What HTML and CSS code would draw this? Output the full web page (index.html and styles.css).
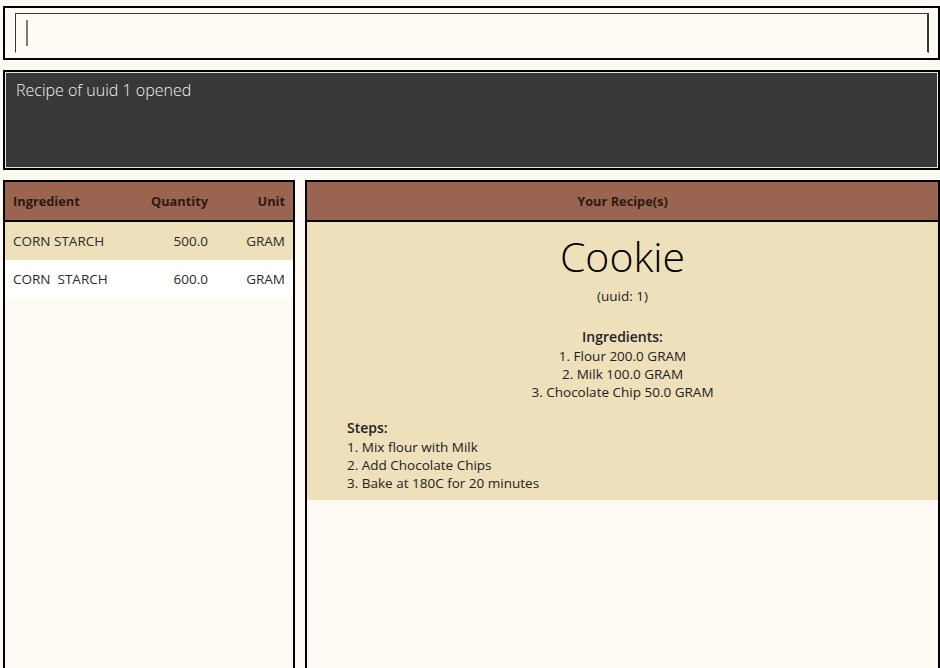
FILE: index.html
```html
<!DOCTYPE html>
<html>
<head>
<meta charset="utf-8">
<link rel="stylesheet" href="styles.css">
</head>
<body>
<div class="app">
  <div class="cmd-box">
    <div class="cmd-input"><span class="caret"></span></div>
  </div>
  <div class="result-box">
    <div class="result-inner">Recipe of uuid 1 opened</div>
  </div>
  <div class="main">
    <div class="panel left">
      <div class="thead row">
        <div class="c-name">Ingredient</div>
        <div class="c-qty">Quantity</div>
        <div class="c-unit">Unit</div>
      </div>
      <div class="row body-row odd">
        <div class="c-name">CORN STARCH</div>
        <div class="c-qty">500.0</div>
        <div class="c-unit">GRAM</div>
      </div>
      <div class="row body-row even">
        <div class="c-name">CORN&nbsp; STARCH</div>
        <div class="c-qty">600.0</div>
        <div class="c-unit">GRAM</div>
      </div>
    </div>
    <div class="panel right">
      <div class="thead center">Your Recipe(s)</div>
      <div class="recipe">
        <div class="title">Cookie</div>
        <div class="uuid">(uuid: 1)</div>
        <div class="ing-head">Ingredients:</div>
        <div class="ing-list">
          <div>1. Flour 200.0 GRAM</div>
          <div>2. Milk 100.0 GRAM</div>
          <div>3. Chocolate Chip 50.0 GRAM</div>
        </div>
        <div class="steps">
          <div class="steps-head">Steps:</div>
          <div>1. Mix flour with Milk</div>
          <div>2. Add Chocolate Chips</div>
          <div>3. Bake at 180C for 20 minutes</div>
        </div>
      </div>
    </div>
  </div>
</div>
</body>
</html>
```
FILE: styles.css
```css
* { box-sizing: border-box; }
html, body { margin: 0; padding: 0; }
body {
  background: #fffaf3;
  font-family: "Open Sans", "Noto Sans", sans-serif;
  color: #222;
  overflow: hidden;
  height: 668px;
}
.app {
  display: flex;
  flex-direction: column;
  padding: 6px 0 0 3px;
  gap: 10px;
}
.cmd-box {
  border: 2px solid #000;
  height: 54px;
  padding: 5px 9px 5px 10px;
}
.cmd-input {
  height: 40px;
  border-top: 1px solid #3a3a3a;
  border-left: 1px solid #3a3a3a;
  border-right: 2px solid #3a3a3a;
  border-bottom: 1px solid #ffffff;
  padding: 6px 0 0 10px;
  display: flex;
}
.caret {
  width: 2px;
  height: 26px;
  background: #7a7a7a;
}
.result-box {
  border: 2px solid #000;
  height: 100px;
}
.result-inner {
  height: 100%;
  border: 1px solid #e6e6e6;
  background: #383838;
  color: #f2f2f2;
  font-size: 16px;
  font-weight: 300;
  padding: 6px 10px;
}
.main {
  display: flex;
  gap: 10px;
  height: 500px;
}
.panel {
  border: 2px solid #000;
  border-bottom: none;
  display: flex;
  flex-direction: column;
}
.left { width: 292px; }
.right { flex: 1; }
.thead {
  height: 40px;
  background: #9b6450;
  border-bottom: 2px solid #000;
  color: #2a1a12;
  font-weight: 700;
  font-size: 12.8px;
}
.row {
  display: grid;
  grid-template-columns: 1fr 80px 77px;
  padding: 0 8px;
  align-items: center;
}
.body-row {
  height: 38px;
  font-size: 13.5px;
  color: #2b2b2b;
}
.odd { background: #ede0ba; }
.even { background: #ffffff; }
.c-qty, .c-unit { text-align: right; }
.center {
  display: flex;
  align-items: center;
  justify-content: center;
}
.recipe {
  background: #ede0ba;
  height: 278px;
  display: flex;
  flex-direction: column;
  align-items: center;
  font-size: 13.5px;
  line-height: 18px;
  color: #222;
}
.title {
  font-size: 41px;
  font-weight: 300;
  color: #000;
  line-height: 50px;
  margin-top: 9px;
}
.uuid { margin-top: 6px; }
.ing-head {
  margin-top: 22px;
  font-size: 14px;
  font-weight: 600;
  line-height: 20px;
}
.ing-list { text-align: center; }
.steps {
  align-self: stretch;
  padding-left: 40px;
  margin-top: 17px;
}
.steps-head {
  font-size: 14px;
  font-weight: 600;
  line-height: 20px;
}
```
